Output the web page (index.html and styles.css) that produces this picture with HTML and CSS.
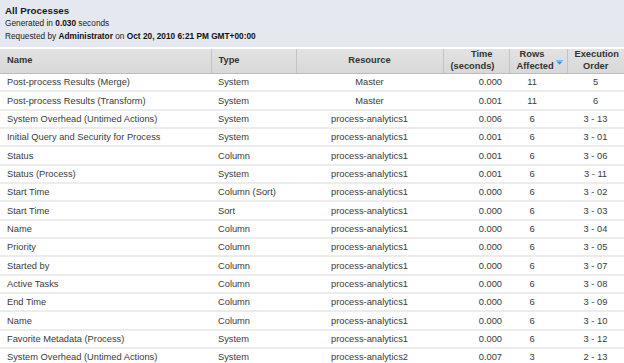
FILE: index.html
```html
<!DOCTYPE html>
<html lang="en">
<head>
    <meta charset="UTF-8">
    <title>All Processes</title>
    <link rel="stylesheet" href="styles.css">
</head>
<body>
    <div class="report-head">
        <div class="report-title">All Processes</div>
        <div class="report-meta">Generated in <b>0.030</b> seconds</div>
        <div class="report-meta">Requested by <b>Administrator</b> on <b>Oct 20, 2010 6:21 PM GMT+00:00</b></div>
    </div>

    <table class="grid">
        <colgroup>
            <col class="c-name">
            <col class="c-type">
            <col class="c-res">
            <col class="c-time">
            <col class="c-rows">
            <col class="c-order">
        </colgroup>
        <thead>
            <tr>
                <th class="left">Name</th>
                <th class="left">Type</th>
                <th>Resource</th>
                <th class="right">Time<br>(seconds)</th>
                <th class="sorted">Rows<br>Affected
                    <svg class="sort-icon" width="7" height="5" viewBox="0 0 7 5">
                        <rect x="0" y="0" width="7" height="1" fill="#7ab4ec"/>
                        <polygon points="0.5,1.5 6.5,1.5 3.5,4.8" fill="#3a8ee0"/>
                    </svg>
                </th>
                <th>Execution<br>Order</th>
            </tr>
        </thead>
        <tbody>
            <tr><td>Post-process Results (Merge)</td><td>System</td><td class="center">Master</td><td class="right">0.000</td><td class="rows">11</td><td class="center">5</td></tr>
            <tr><td>Post-process Results (Transform)</td><td>System</td><td class="center">Master</td><td class="right">0.001</td><td class="rows">11</td><td class="center">6</td></tr>
            <tr><td>System Overhead (Untimed Actions)</td><td>System</td><td class="center">process-analytics1</td><td class="right">0.006</td><td class="rows">6</td><td class="center">3 - 13</td></tr>
            <tr><td>Initial Query and Security for Process</td><td>System</td><td class="center">process-analytics1</td><td class="right">0.001</td><td class="rows">6</td><td class="center">3 - 01</td></tr>
            <tr><td>Status</td><td>Column</td><td class="center">process-analytics1</td><td class="right">0.001</td><td class="rows">6</td><td class="center">3 - 06</td></tr>
            <tr><td>Status (Process)</td><td>System</td><td class="center">process-analytics1</td><td class="right">0.001</td><td class="rows">6</td><td class="center">3 - 11</td></tr>
            <tr><td>Start Time</td><td>Column (Sort)</td><td class="center">process-analytics1</td><td class="right">0.000</td><td class="rows">6</td><td class="center">3 - 02</td></tr>
            <tr><td>Start Time</td><td>Sort</td><td class="center">process-analytics1</td><td class="right">0.000</td><td class="rows">6</td><td class="center">3 - 03</td></tr>
            <tr><td>Name</td><td>Column</td><td class="center">process-analytics1</td><td class="right">0.000</td><td class="rows">6</td><td class="center">3 - 04</td></tr>
            <tr><td>Priority</td><td>Column</td><td class="center">process-analytics1</td><td class="right">0.000</td><td class="rows">6</td><td class="center">3 - 05</td></tr>
            <tr><td>Started by</td><td>Column</td><td class="center">process-analytics1</td><td class="right">0.000</td><td class="rows">6</td><td class="center">3 - 07</td></tr>
            <tr><td>Active Tasks</td><td>Column</td><td class="center">process-analytics1</td><td class="right">0.000</td><td class="rows">6</td><td class="center">3 - 08</td></tr>
            <tr><td>End Time</td><td>Column</td><td class="center">process-analytics1</td><td class="right">0.000</td><td class="rows">6</td><td class="center">3 - 09</td></tr>
            <tr><td>Name</td><td>Column</td><td class="center">process-analytics1</td><td class="right">0.000</td><td class="rows">6</td><td class="center">3 - 10</td></tr>
            <tr><td>Favorite Metadata (Process)</td><td>System</td><td class="center">process-analytics1</td><td class="right">0.000</td><td class="rows">6</td><td class="center">3 - 12</td></tr>
            <tr><td>System Overhead (Untimed Actions)</td><td>System</td><td class="center">process-analytics2</td><td class="right">0.007</td><td class="rows">3</td><td class="center">2 - 13</td></tr>
        </tbody>
    </table>
</body>
</html>
```

FILE: styles.css
```css
* {
    margin: 0;
    padding: 0;
    box-sizing: border-box;
}

body {
    font-family: 'Liberation Sans', Arial, sans-serif;
    color: #333333;
    background: #ffffff;
    width: 624px;
    overflow: hidden;
}

.report-head {
    background: #e5e8ee;
    padding: 4px 5px 4px;
    height: 47px;
}

.report-title {
    font-size: 9.8px;
    font-weight: bold;
    color: #1a1a1a;
    line-height: 13px;
}

.report-meta {
    font-size: 8.3px;
    line-height: 13px;
    color: #222222;
}

.report-meta b {
    color: #111111;
}

.grid {
    margin-top: 2px;
    width: 624px;
    border-collapse: collapse;
    table-layout: fixed;
    font-size: 9.3px;
}

.c-name { width: 211px; }
.c-type { width: 85px; }
.c-res { width: 147px; }
.c-time { width: 66px; }
.c-rows { width: 58px; }
.c-order { width: 57px; }

.grid th {
    height: 24px;
    background: linear-gradient(#e2e2e2, #d8d8d8);
    border-left: 1px solid #c4c4c4;
    border-bottom: 1px solid #bcbcbc;
    font-weight: bold;
    color: #333333;
    line-height: 11.5px;
    text-align: center;
    vertical-align: middle;
    padding: 0 7px;
}

.grid th:first-child {
    border-left: none;
}

.grid th.left {
    text-align: left;
}

.grid th.right {
    text-align: right;
    padding-right: 16px;
}

.grid th.sorted {
    position: relative;
    padding-right: 19px;
}

.sort-icon {
    position: absolute;
    right: 4px;
    top: 11px;
}

.grid td {
    height: 18.35px;
    padding: 0 7px;
    border-bottom: 2px solid #ececec;
    color: #3a3a3a;
    white-space: nowrap;
    overflow: hidden;
    vertical-align: middle;
}

.grid td.center {
    text-align: center;
}

.grid td.right {
    text-align: right;
}

.grid td.rows {
    text-align: center;
    padding-right: 19px;
}
```
